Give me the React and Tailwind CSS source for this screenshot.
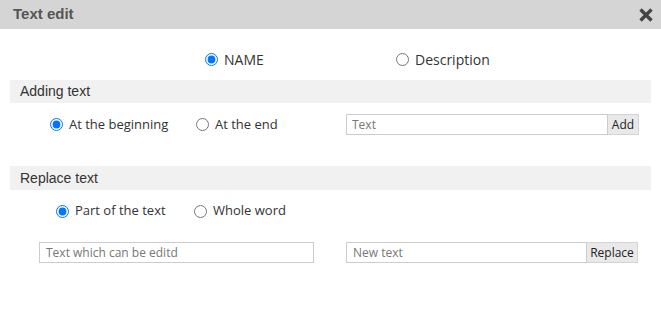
import React from "react";

function Radio({ name, checked, label, className = "" }) {
  return (
    <label className={`flex items-center gap-[6px] text-[#333] ${className}`}>
      <input
        type="radio"
        name={name}
        defaultChecked={checked}
        className="m-0 h-[13px] w-[13px] accent-[#0075ff]"
      />
      <span>{label}</span>
    </label>
  );
}

export default function App() {
  return (
    <div className="w-[661px] h-[332px] bg-white font-['Open_Sans',sans-serif] overflow-hidden">
      <div className="h-[29px] bg-[#d5d5d5] flex items-center justify-between pl-[13px] pr-[8px]">
        <span className="font-['Liberation_Sans',Arial,sans-serif] font-bold text-[15px] text-[#555]">
          Text edit
        </span>
        <svg width="14" height="14" viewBox="0 0 14 14" className="mt-[1px]">
          <path d="M1.5 1.5 L12.5 12.5 M12.5 1.5 L1.5 12.5" stroke="#444" strokeWidth="3.4" strokeLinecap="butt" />
        </svg>
      </div>

      <div className="mt-[20px] h-[20px] flex items-center pl-[205px] text-[14px]">
        <Radio name="target" checked label="NAME" className="w-[191px]" />
        <Radio name="target" label="Description" />
      </div>

      <div className="mt-[11px] mx-[10px] h-[23px] bg-[#f1f1f1] flex items-center pl-[10px] font-['Liberation_Sans',Arial,sans-serif] text-[14px] text-[#333]">
        Adding text
      </div>

      <div className="mt-[11px] h-[21px] flex items-center pl-[50px] text-[13px]">
        <Radio name="pos" checked label="At the beginning" className="w-[146px]" />
        <Radio name="pos" label="At the end" className="w-[150px]" />
        <div className="flex h-[21px]">
          <input
            type="text"
            placeholder="Text"
            className="w-[262px] h-[21px] border border-[#ccc] pl-[5px] text-[12px] text-[#333] placeholder:text-[#777] outline-none"
          />
          <button className="w-[31px] h-[21px] bg-[#e9e9e9] border border-l-0 border-[#d4d4d4] text-[12px] text-[#222] flex items-center justify-center">
            Add
          </button>
        </div>
      </div>

      <div className="mt-[31px] mx-[10px] h-[24px] bg-[#f1f1f1] flex items-center pl-[10px] font-['Liberation_Sans',Arial,sans-serif] text-[14px] text-[#333]">
        Replace text
      </div>

      <div className="mt-[11px] h-[20px] flex items-center pl-[56px] text-[13px]">
        <Radio name="mode" checked label="Part of the text" className="w-[138px]" />
        <Radio name="mode" label="Whole word" />
      </div>

      <div className="mt-[21px] h-[21px] flex items-center pl-[39px]">
        <input
          type="text"
          placeholder="Text which can be editd"
          className="w-[275px] h-[21px] border border-[#ccc] pl-[6px] text-[12px] text-[#333] placeholder:text-[#777] outline-none"
        />
        <div className="ml-[32px] flex h-[21px]">
          <input
            type="text"
            placeholder="New text"
            className="w-[241px] h-[21px] border border-[#ccc] pl-[6px] text-[12px] text-[#333] placeholder:text-[#777] outline-none"
          />
          <button className="w-[51px] h-[21px] bg-[#e9e9e9] border border-l-0 border-[#d4d4d4] text-[12px] text-[#222] flex items-center justify-center">
            Replace
          </button>
        </div>
      </div>
    </div>
  );
}
